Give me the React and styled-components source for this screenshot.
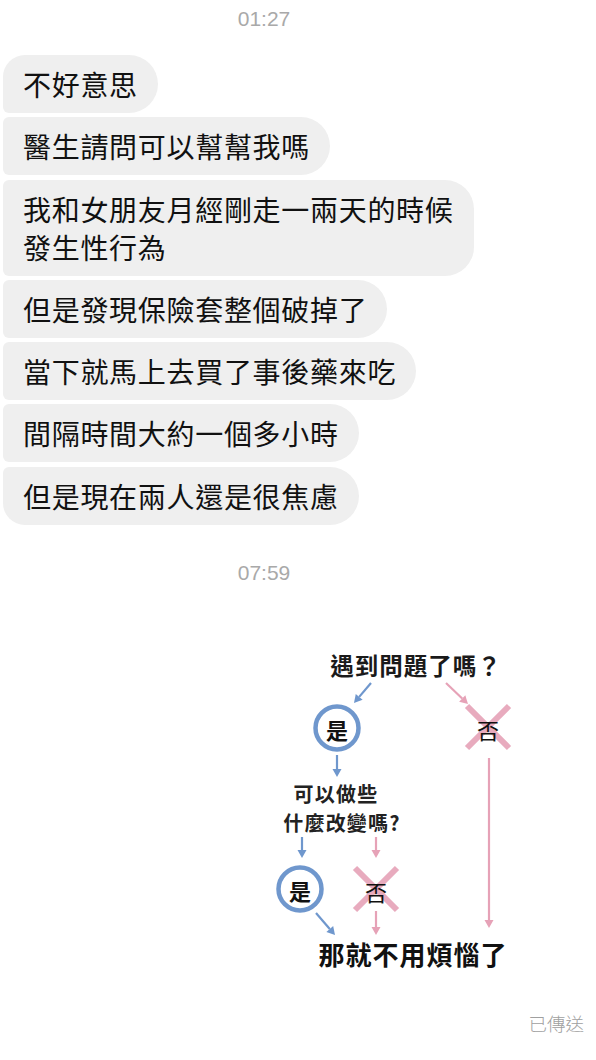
import React from "react";
import styled, { createGlobalStyle } from "styled-components";

const Global = createGlobalStyle`
  html, body { margin: 0; padding: 0; background: #ffffff; }
  body { font-family: "Noto Sans CJK TC", "Noto Sans", sans-serif; }
`;

const Page = styled.div`
  width: 596px;
  height: 1060px;
  overflow: hidden;
  background: #fff;
  display: flex;
  flex-direction: column;
`;

const Stamp = styled.div`
  font-family: "Liberation Sans", Arial, sans-serif;
  font-size: 21px;
  line-height: 38px;
  color: #a9a9a9;
  text-align: center;
  padding-right: 68px;
  margin-top: ${(p) => p.$top || 0}px;
`;

const Thread = styled.div`
  display: flex;
  flex-direction: column;
  align-items: flex-start;
  gap: 4.3px;
  padding-left: 3px;
  margin-top: ${(p) => p.$top || 0}px;
`;

const Bubble = styled.div`
  background: #efefef;
  color: #111;
  font-family: "Noto Sans CJK TC", "Noto Sans", sans-serif;
  font-size: 28px;
  letter-spacing: 0.7px;
  line-height: 38px;
  padding: 10px 20px;
  border-radius: ${(p) => (p.$first ? 22 : 6)}px 29px 29px ${(p) => (p.$last ? 22 : 6)}px;
`;

const ImageRow = styled.div`
  display: flex;
  justify-content: flex-end;
  padding-right: 76px;
  margin-top: ${(p) => p.$top || 0}px;
`;

const Status = styled.div`
  text-align: right;
  padding-right: 12px;
  font-size: 18.5px;
  line-height: 24px;
  color: #a0a0a0;
  font-weight: 300;
  margin-top: ${(p) => p.$top || 0}px;
`;

const BLUE = "#6f97cd";
const PINK = "#e6a2b7";

function Arrow({ x1, y1, x2, y2, color, w = 2.2 }) {
  const a = Math.atan2(y2 - y1, x2 - x1);
  const len = 8;
  const wid = 4.5;
  const bx = x2 - len * Math.cos(a);
  const by = y2 - len * Math.sin(a);
  const px = -Math.sin(a) * wid;
  const py = Math.cos(a) * wid;
  return (
    <g>
      <line x1={x1} y1={y1} x2={bx} y2={by} stroke={color} strokeWidth={w} />
      <polygon
        points={`${x2},${y2} ${bx + px},${by + py} ${bx - px},${by - py}`}
        fill={color}
      />
    </g>
  );
}

function Yes({ cx, cy }) {
  return (
    <g>
      <circle cx={cx} cy={cy} r={21.5} fill="#fff" stroke={BLUE} strokeWidth={4.5} />
      <text x={cx} y={cy + 1} fontSize="22" fontWeight="700" textAnchor="middle" dominantBaseline="central" fill="#111">是</text>
    </g>
  );
}

function No({ cx, cy }) {
  const d = 21;
  return (
    <g>
      <line x1={cx - d} y1={cy - d} x2={cx + d} y2={cy + d} stroke={PINK} strokeWidth={6} opacity={0.9} />
      <line x1={cx + d} y1={cy - d} x2={cx - d} y2={cy + d} stroke={PINK} strokeWidth={6} opacity={0.9} />
      <text x={cx} y={cy + 2} fontSize="22" fontWeight="400" textAnchor="middle" dominantBaseline="central" fill="#111">否</text>
    </g>
  );
}

const Chart = styled.svg`
  display: block;
  font-family: "Noto Sans CJK TC", "Noto Sans", sans-serif;
`;

function Flowchart() {
  return (
    <Chart width="250" height="330" viewBox="0 0 250 330">
      <text x="146" y="24" fontSize="23.5" fontWeight="700" letterSpacing="1" textAnchor="middle" dominantBaseline="central" fill="#1a1a1a">遇到問題了嗎？</text>
      <Arrow x1={101} y1={42} x2={84} y2={62} color={BLUE} />
      <Arrow x1={176} y1={42} x2={198} y2={63} color={PINK} />
      <Yes cx={67} cy={87} />
      <No cx={218} cy={86} />
      <Arrow x1={219} y1={117} x2={219} y2={287} color={PINK} />
      <Arrow x1={67} y1={114} x2={67} y2={136} color={BLUE} />
      <text x="66" y="152" fontSize="20" fontWeight="700" letterSpacing="1.2" textAnchor="middle" dominantBaseline="central" fill="#222">可以做些</text>
      <text x="72" y="181" fontSize="20" fontWeight="700" letterSpacing="1.2" textAnchor="middle" dominantBaseline="central" fill="#222">什麼改變嗎?</text>
      <Arrow x1={32} y1={196} x2={32} y2={217} color={BLUE} />
      <Arrow x1={106} y1={196} x2={106} y2={217} color={PINK} />
      <Yes cx={30} cy={248} />
      <No cx={106} cy={248} />
      <Arrow x1={46} y1={272} x2={65} y2={294} color={BLUE} />
      <Arrow x1={106} y1={270} x2={106} y2={294} color={PINK} />
      <text x="143" y="312" fontSize="26" fontWeight="700" letterSpacing="1" textAnchor="middle" dominantBaseline="central" fill="#111">那就不用煩惱了</text>
    </Chart>
  );
}

const messages = [
  "不好意思",
  "醫生請問可以幫幫我嗎",
  "我和女朋友月經剛走一兩天的時候\n發生性行為",
  "但是發現保險套整個破掉了",
  "當下就馬上去買了事後藥來吃",
  "間隔時間大約一個多小時",
  "但是現在兩人還是很焦慮",
];

export default function App() {
  return (
    <Page>
      <Global />
      <Stamp>01:27</Stamp>
      <Thread $top={17}>
        {messages.map((m, i) => (
          <Bubble key={i} $first={i === 0} $last={i === messages.length - 1}>
            {m.split("\n").map((line, j) => (
              <div key={j}>{line}</div>
            ))}
          </Bubble>
        ))}
      </Thread>
      <Stamp $top={29}>07:59</Stamp>
      <ImageRow $top={49}>
        <Flowchart />
      </ImageRow>
      <Status $top={40}>已傳送</Status>
    </Page>
  );
}
